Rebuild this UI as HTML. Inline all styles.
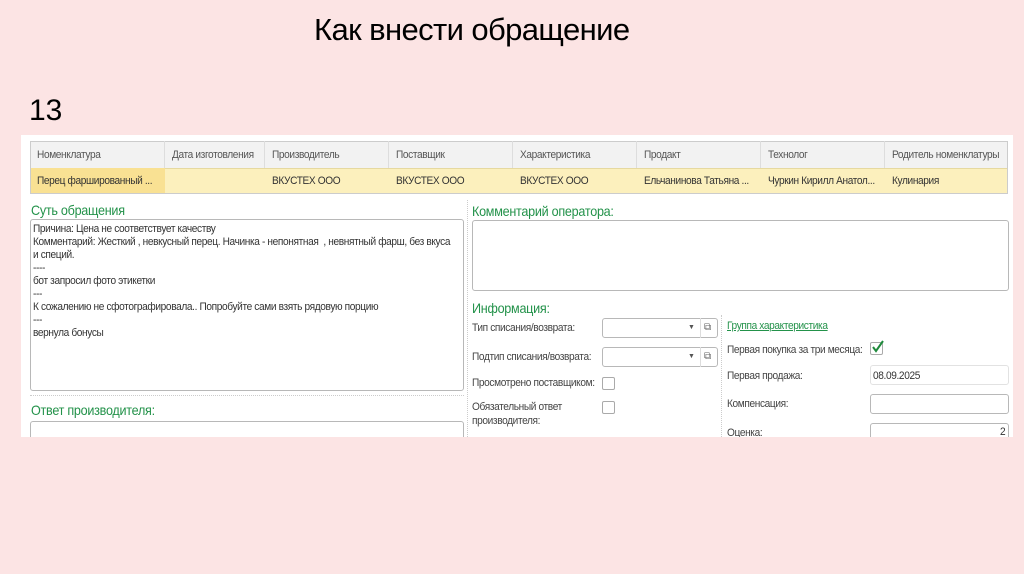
<!DOCTYPE html>
<html><head><meta charset="utf-8"><style>
*{margin:0;padding:0;box-sizing:border-box}
body{width:1024px;height:574px;background:#fce4e4;font-family:"Liberation Sans",sans-serif;position:relative;overflow:hidden}
.a{position:absolute;white-space:nowrap;transform-origin:left top}
.t{font-size:11px;color:#444;letter-spacing:-0.4px;transform:scaleX(0.92)}
.g{color:#23924a;font-size:14px;letter-spacing:-0.3px;transform:scaleX(0.9)}
.box{position:absolute;border:1px solid #b8b8b8;border-radius:3px;background:#fff}
.cb{position:absolute;width:13px;height:13px;border:1px solid #aaa;border-radius:2px;background:#fff}
.hd{position:absolute;top:141px;height:27px;border-right:1px solid #ddd;padding:8px 0 0 7px;font-size:11px;color:#555;letter-spacing:-0.4px;white-space:nowrap;overflow:hidden}
.rw{position:absolute;top:168px;height:25px;padding:7px 0 0 7px;font-size:11px;color:#333;letter-spacing:-0.4px;white-space:nowrap}
.hd span,.rw span{display:inline-block;transform:scaleX(0.92);transform-origin:left top}
</style></head><body>
<div class="a" style="left:314px;top:12px;font-size:31px;color:#000;letter-spacing:-0.6px">Как внести обращение</div>
<div class="a" style="left:29px;top:94px;font-size:30px;color:#000">13</div>
<div style="position:absolute;left:21px;top:135px;width:992px;height:302px;background:#fff"></div>
<div style="position:absolute;left:30px;top:141px;width:978px;height:53px;border:1px solid #ccc;background:#f2f2f2"></div>
<div style="position:absolute;left:31px;top:168px;width:976px;height:25px;background:#fcf0bd;border-top:1px solid #e6d9a0"></div>
<div style="position:absolute;left:31px;top:168px;width:134px;height:25px;background:#f9e193"></div>
<div class="hd" style="left:30px;width:135px"><span>Номенклатура</span></div>
<div class="hd" style="left:165px;width:100px"><span>Дата изготовления</span></div>
<div class="hd" style="left:265px;width:124px"><span>Производитель</span></div>
<div class="hd" style="left:389px;width:124px"><span>Поставщик</span></div>
<div class="hd" style="left:513px;width:124px"><span>Характеристика</span></div>
<div class="hd" style="left:637px;width:124px"><span>Продакт</span></div>
<div class="hd" style="left:761px;width:124px"><span>Технолог</span></div>
<div class="hd" style="left:885px;width:123px;border:none"><span>Родитель номенклатуры</span></div>
<div class="rw" style="left:30px"><span>Перец фаршированный ...</span></div>
<div class="rw" style="left:265px"><span>ВКУСТЕХ ООО</span></div>
<div class="rw" style="left:389px"><span>ВКУСТЕХ ООО</span></div>
<div class="rw" style="left:513px"><span>ВКУСТЕХ ООО</span></div>
<div class="rw" style="left:637px"><span>Ельчанинова Татьяна ...</span></div>
<div class="rw" style="left:761px"><span>Чуркин Кирилл Анатол...</span></div>
<div class="rw" style="left:885px"><span>Кулинария</span></div>

<div class="a g" style="left:31px;top:202px">Суть обращения</div>
<div class="box" style="left:30px;top:219px;width:434px;height:172px"></div>
<div class="a t" style="left:33px;top:223px;line-height:13px;color:#333">Причина: Цена не соответствует качеству<br>Комментарий: Жесткий , невкусный перец. Начинка - непонятная &nbsp;, невнятный фарш, без вкуса<br>и специй.<br>----<br>бот запросил фото этикетки<br>---<br>К сожалению не сфотографировала.. Попробуйте сами взять рядовую порцию<br>---<br>вернула бонусы</div>
<div style="position:absolute;left:30px;top:395px;width:434px;border-top:1px dotted #ccc"></div>
<div class="a g" style="left:31px;top:402px">Ответ производителя:</div>
<div class="box" style="left:30px;top:421px;width:434px;height:30px"></div>
<div style="position:absolute;left:467px;top:200px;height:237px;border-left:1px dotted #ccc"></div>

<div class="a g" style="left:472px;top:203px">Комментарий оператора:</div>
<div class="box" style="left:472px;top:220px;width:537px;height:71px"></div>
<div class="a g" style="left:472px;top:300px">Информация:</div>
<div class="a t" style="left:472px;top:322px">Тип списания/возврата:</div>
<div class="box" style="left:602px;top:318px;width:116px;height:20px"></div>
<div class="a" style="left:688px;top:324px;font-size:7px;color:#555">▼</div>
<div style="position:absolute;left:700px;top:318px;height:20px;border-left:1px solid #ddd"></div>
<div class="a" style="left:704px;top:322px;font-size:10px;color:#666">⧉</div>
<div class="a t" style="left:472px;top:351px">Подтип списания/возврата:</div>
<div class="box" style="left:602px;top:347px;width:116px;height:20px"></div>
<div class="a" style="left:688px;top:353px;font-size:7px;color:#555">▼</div>
<div style="position:absolute;left:700px;top:347px;height:20px;border-left:1px solid #ddd"></div>
<div class="a" style="left:704px;top:351px;font-size:10px;color:#666">⧉</div>
<div class="a t" style="left:472px;top:377px">Просмотрено поставщиком:</div>
<div class="cb" style="left:602px;top:377px"></div>
<div class="a t" style="left:472px;top:400px;line-height:14px">Обязательный ответ<br>производителя:</div>
<div class="cb" style="left:602px;top:401px"></div>
<div style="position:absolute;left:721px;top:315px;height:122px;border-left:1px dotted #ccc"></div>

<div class="a t" style="left:727px;top:320px;color:#23924a;text-decoration:underline">Группа характеристика</div>
<div class="a t" style="left:727px;top:344px">Первая покупка за три месяца:</div>
<div class="cb" style="left:870px;top:342px"></div>
<svg class="a" style="left:871px;top:340px" width="14" height="14" viewBox="0 0 14 14"><path d="M2 7l3 4 7-10" stroke="#1f8a3c" stroke-width="2" fill="none"/></svg>
<div class="a t" style="left:727px;top:370px">Первая продажа:</div>
<div class="box" style="left:870px;top:365px;width:139px;height:20px;border-color:#e2e2e2"></div>
<div class="a t" style="left:873px;top:370px;color:#333">08.09.2025</div>
<div class="a t" style="left:727px;top:398px">Компенсация:</div>
<div class="box" style="left:870px;top:394px;width:139px;height:20px"></div>
<div class="a t" style="left:727px;top:427px">Оценка:</div>
<div class="box" style="left:870px;top:423px;width:139px;height:20px"></div>
<div class="a t" style="left:1000px;top:426px;color:#333">2</div>

<div style="position:absolute;left:0;top:437px;width:1024px;height:137px;background:#fce4e4"></div>
</body></html>
